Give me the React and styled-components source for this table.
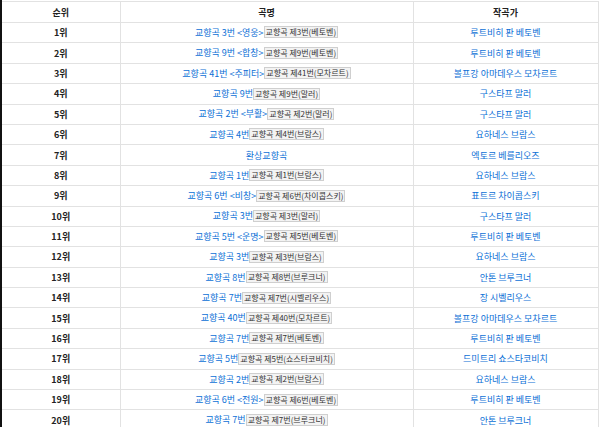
import React from 'react';
import styled, { createGlobalStyle } from 'styled-components';

const GlobalStyle = createGlobalStyle`
  html, body {
    margin: 0;
    padding: 0;
    background: #fff;
  }
  body {
    font-family: "Noto Sans CJK KR", "Noto Sans", sans-serif;
  }
`;

const Page = styled.div`
  width: 599px;
  height: 427px;
  overflow: hidden;
  padding-top: 1px;
  box-sizing: border-box;
  border-left: 2px solid #111;
`;

const Table = styled.table`
  border-collapse: collapse;
  width: 596px;
  table-layout: fixed;
  font-size: 9px;
  color: #222;
`;

const HeadCell = styled.th`
  height: 20px;
  padding: 0;
  font-weight: 700;
  text-align: center;
  border: 1px solid #e2e2e2;
  border-left: ${p => (p.$first ? 'none' : '1px solid #e2e2e2')};
  border-right: 1px solid #e2e2e2;
`;

const Row = styled.tr`
  height: 20.4px;
`;

const Cell = styled.td`
  padding: 0;
  text-align: center;
  white-space: nowrap;
  font-weight: ${p => (p.$bold ? 700 : 400)};
  border: 1px solid #e2e2e2;
  border-left: ${p => (p.$first ? 'none' : '1px solid #e2e2e2')};
`;

const Link = styled.span`
  color: #0b6fd6;
`;

const Tag = styled.span`
  display: inline-block;
  font-size: 8px;
  line-height: 10px;
  padding: 0 1px;
  color: #333;
  background: #f3f3f3;
  border: 1px solid #cfcfcf;
  vertical-align: middle;
  position: relative;
  top: -1px;
`;

const rows = [
  ['교향곡 3번 <영웅>', '교향곡 제3번(베토벤)', '루트비히 판 베토벤'],
  ['교향곡 9번 <합창>', '교향곡 제9번(베토벤)', '루트비히 판 베토벤'],
  ['교향곡 41번 <주피터>', '교향곡 제41번(모차르트)', '볼프강 아마데우스 모차르트'],
  ['교향곡 9번', '교향곡 제9번(말러)', '구스타프 말러'],
  ['교향곡 2번 <부활>', '교향곡 제2번(말러)', '구스타프 말러'],
  ['교향곡 4번', '교향곡 제4번(브람스)', '요하네스 브람스'],
  ['환상교향곡', null, '엑토르 베를리오즈'],
  ['교향곡 1번', '교향곡 제1번(브람스)', '요하네스 브람스'],
  ['교향곡 6번 <비창>', '교향곡 제6번(차이콥스키)', '표트르 차이콥스키'],
  ['교향곡 3번', '교향곡 제3번(말러)', '구스타프 말러'],
  ['교향곡 5번 <운명>', '교향곡 제5번(베토벤)', '루트비히 판 베토벤'],
  ['교향곡 3번', '교향곡 제3번(브람스)', '요하네스 브람스'],
  ['교향곡 8번', '교향곡 제8번(브루크너)', '안톤 브루크너'],
  ['교향곡 7번', '교향곡 제7번(시벨리우스)', '장 시벨리우스'],
  ['교향곡 40번', '교향곡 제40번(모차르트)', '볼프강 아마데우스 모차르트'],
  ['교향곡 7번', '교향곡 제7번(베토벤)', '루트비히 판 베토벤'],
  ['교향곡 5번', '교향곡 제5번(쇼스타코비치)', '드미트리 쇼스타코비치'],
  ['교향곡 2번', '교향곡 제2번(브람스)', '요하네스 브람스'],
  ['교향곡 6번 <전원>', '교향곡 제6번(베토벤)', '루트비히 판 베토벤'],
  ['교향곡 7번', '교향곡 제7번(브루크너)', '안톤 브루크너'],
];

export default function App() {
  return (
    <Page>
      <GlobalStyle />
      <Table>
        <colgroup>
          <col style={{ width: 118 }} />
          <col style={{ width: 293 }} />
          <col style={{ width: 185 }} />
        </colgroup>
        <thead>
          <tr>
            <HeadCell $first>순위</HeadCell>
            <HeadCell>곡명</HeadCell>
            <HeadCell>작곡가</HeadCell>
          </tr>
        </thead>
        <tbody>
          {rows.map(([title, tag, composer], i) => (
            <Row key={i}>
              <Cell $first $bold>{i + 1}위</Cell>
              <Cell>
                <Link>{title}</Link>
                {tag && <Tag>{tag}</Tag>}
              </Cell>
              <Cell>
                <Link>{composer}</Link>
              </Cell>
            </Row>
          ))}
        </tbody>
      </Table>
    </Page>
  );
}
